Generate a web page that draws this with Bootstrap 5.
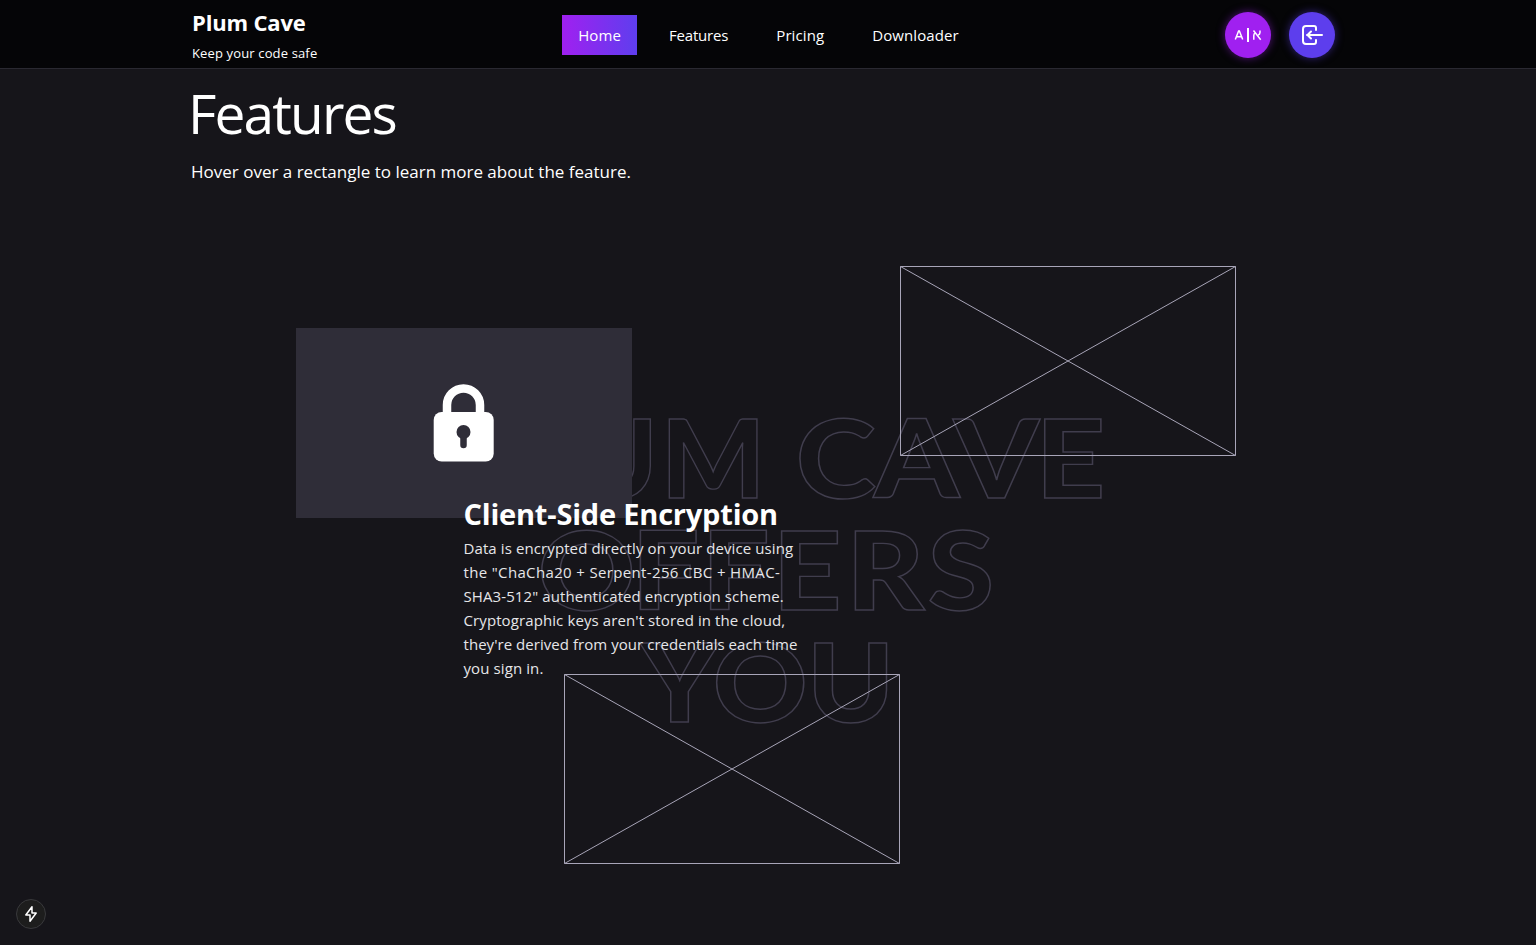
<!DOCTYPE html>
<html lang="en" data-bs-theme="dark">
<head>
<meta charset="utf-8">
<meta name="viewport" content="width=device-width, initial-scale=1">
<title>Plum Cave</title>
<link href="https://cdn.jsdelivr.net/npm/bootstrap@5.3.0/dist/css/bootstrap.min.css" rel="stylesheet">
<style>
body{background:#16151a;color:#fff;font-family:"Open Sans","Noto Sans",sans-serif;height:945px;overflow:hidden}
.site-header{background:#050507;border-bottom:1px solid #2a2931;height:69px}
.wrap{width:1152px;margin:0 auto}
.side{width:280px}
.brand-name{font-size:22px;font-weight:700;line-height:32px;margin-top:-2px;letter-spacing:-.16px}
.brand-sub{font-size:13px;line-height:20px;margin-top:5px;font-weight:500;letter-spacing:.14px}
.site-nav{padding-top:15px;margin-left:1px}
.site-nav .nav-link{color:#fff;font-size:15px;line-height:24px;padding:8px 16px;height:40px;white-space:nowrap;letter-spacing:.1px}
.site-nav .nav-link:nth-child(2){letter-spacing:-.18px}
.site-nav .nav-link.active{background:linear-gradient(90deg,#a020f0,#5f3eee)}
.side-end{padding:12px 9px 0 0;gap:18px}
.round-btn{width:46px;height:46px;border-radius:50%;padding:0;border:0}
.round-btn.lang{background:#a020f0;box-shadow:0 0 9px #a020f080}
.round-btn.login{background:#5d3eed;box-shadow:0 0 9px #5d3eed80}
.title{font-size:55px;line-height:64px;font-weight:400;margin:12px 0 0 -4px;letter-spacing:-1.85px}
.hint{font-size:17px;line-height:28px;margin:13px 0 1px -1px}
.stage{height:758px}
.outline{left:0;top:0}
.outline text{font-family:Lato,sans-serif;font-weight:900;font-size:109.5px;fill:none;stroke:#403d4d;stroke-width:1.4}
.feature{width:336px;height:190px}
.one{left:295.500px;top:141px;background:#2f2d38}
.two{left:900px;top:79px}
.three{left:564px;top:487px}
.info{left:463.500px;top:306px;width:345px}
.info h2{font-size:29px;line-height:42px;font-weight:700;margin:0;letter-spacing:-.2px}
.info p{font-size:15px;line-height:24px;margin:1px 0 0;color:#e6e6e9;letter-spacing:.1px;white-space:nowrap}
.looser{letter-spacing:.35px}
.tighter{letter-spacing:.047px}
.bolt{left:16px;bottom:16px;width:30px;height:30px;background:#1d1d1d;border:1px solid #39393c;border-radius:50%}
</style>
</head>
<body class="position-relative">
<header class="site-header">
  <div class="wrap d-flex justify-content-between">
    <div class="side pt-2">
      <div class="brand-name">Plum Cave</div>
      <div class="brand-sub">Keep your code safe</div>
    </div>
    <nav class="site-nav nav gap-3 flex-nowrap">
      <a class="nav-link active" href="#">Home</a>
      <a class="nav-link" href="#">Features</a>
      <a class="nav-link" href="#">Pricing</a>
      <a class="nav-link" href="#">Downloader</a>
    </nav>
    <div class="side side-end d-flex justify-content-end">
      <button class="round-btn lang" aria-label="Language"><svg class="d-block" width="46" height="46" viewBox="0 0 46 46" fill="none" stroke="#fff" stroke-width="1.500"><path d="M10.300 27.500 13.600 19h.8l3.300 8.500M11.500 24.800h5"/><path d="M23 16v14" stroke-width="2"/><path d="M28.500 18.500l7.200 9.200M35 18.500v2.100q0 1.800-1.800 2.500M30.300 20.800q-1.500.8-1.500 2.600v4.300"/></svg></button>
      <button class="round-btn login" aria-label="Sign in"><svg class="d-block" width="46" height="46" viewBox="0 0 46 46" fill="none" stroke="#fff" stroke-width="2" stroke-linecap="round" stroke-linejoin="round"><path d="M27 18v-2a2 2 0 0 0-2-2h-8a3 3 0 0 0-3 3v12a3 3 0 0 0 3 3h8a2 2 0 0 0 2-2v-2M33 23H18M22 19.500 18.500 23l3.500 3.500"/></svg></button>
    </div>
  </div>
</header>
<main>
  <div class="wrap">
    <h1 class="title">Features</h1>
    <p class="hint">Hover over a rectangle to learn more about the feature.</p>
  </div>
  <section class="stage position-relative">
    <svg class="outline position-absolute" width="1536" height="758" viewBox="0 187 1536 758">
      <text x="425 500 576 661" y="497.600">PLUM</text>
      <text transform="translate(799 497.600) scale(1.11 1)" x="-3 67.500 139.500 213">CAVE</text>
      <text transform="translate(541 609.600) scale(1.1 1)" x="-3 82 146 210.500 277.500 351.500">OFFERS</text>
      <text transform="translate(641 721.600) scale(1.07 1)" x="0 67 155.200">YOU</text>
    </svg>
    <div class="feature one position-absolute">
      <svg class="d-block" width="336" height="190" viewBox="0 0 336 190"><path d="M151 87V77a16.500 16.500 0 0 1 33 0v10" fill="none" stroke="#fff" stroke-width="8.500"/><rect x="137.700" y="84" width="60" height="49.500" rx="8" fill="#fff"/><circle cx="167.500" cy="104" r="7" fill="#2f2d38"/><path d="M167.500 105v12" stroke="#2f2d38" stroke-width="6.500" stroke-linecap="round"/></svg>
    </div>
    <svg class="feature two position-absolute" viewBox="0 0 336 190" fill="none" stroke="#a8a5b8"><path d="M.5.5h335v189H.5zM.5.5l335 189M335.500.5.5 189.500"/></svg>
    <svg class="feature three position-absolute" viewBox="0 0 336 190" fill="none" stroke="#a8a5b8"><path d="M.5.5h335v189H.5zM.5.5l335 189M335.500.5.5 189.500"/></svg>
    <div class="info position-absolute">
      <h2>Client-Side Encryption</h2>
      <p>Data is encrypted directly on your device using<br>
      <span class="looser">the "ChaCha20 + Serpent-256 CBC + HMAC-</span><br>
      SHA3-512" authenticated encryption scheme.<br>
      Cryptographic keys aren't stored in the cloud,<br>
      <span class="tighter">they're derived from your credentials each time</span><br>
      you sign in.</p>
    </div>
  </section>
</main>
<div class="bolt position-absolute d-flex align-items-center justify-content-center"><svg width="16" height="16" viewBox="0 0 16 16" fill="none" stroke="#fff" stroke-width="1.500" stroke-linejoin="round"><path d="M9 .8 2.800 9H7v6.200L13.200 7H9z"/></svg></div>
<script src="https://cdn.jsdelivr.net/npm/bootstrap@5.3.0/dist/js/bootstrap.bundle.min.js"></script>
</body>
</html>
